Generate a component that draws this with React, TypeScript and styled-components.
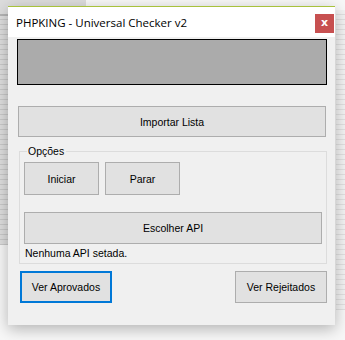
import React from "react";
import styled, { createGlobalStyle } from "styled-components";

const GlobalStyle = createGlobalStyle`
  html, body {
    margin: 0;
    padding: 0;
    background: #f6f6f6;
  }
  * {
    box-sizing: border-box;
  }
`;

export default function App() {
  return (
    <>
      <GlobalStyle />
      <Desktop>
        <LeftStrip />
        <TopBand />
        <RightStrip />
        <Window>
          <TitleBar>
            <Title>PHPKING - Universal Checker v2</Title>
            <CloseButton>x</CloseButton>
          </TitleBar>
          <Content>
            <Display />
            <WideButton>Importar Lista</WideButton>
            <GroupBox>
              <Legend>Opções</Legend>
              <ButtonRow>
                <SmallButton>Iniciar</SmallButton>
                <SmallButton>Parar</SmallButton>
              </ButtonRow>
              <ApiButton>Escolher API</ApiButton>
              <StatusLabel>Nenhuma API setada.</StatusLabel>
            </GroupBox>
            <Footer>
              <FooterButton $focused>Ver Aprovados</FooterButton>
              <FooterButton>Ver Rejeitados</FooterButton>
            </Footer>
          </Content>
        </Window>
      </Desktop>
    </>
  );
}

const Desktop = styled.div`
  position: relative;
  width: 345px;
  height: 340px;
  overflow: hidden;
  padding: 6px 0 0 8px;
  background: #f7f7f7;
`;

const LeftStrip = styled.div`
  position: absolute;
  left: 0;
  top: 15px;
  width: 8px;
  height: 230px;
  background: repeating-linear-gradient(
    to bottom,
    #dedede 0px,
    #dedede 4px,
    #c9c9c9 4px,
    #c9c9c9 5px
  );
`;

const TopBand = styled.div`
  position: absolute;
  left: 0;
  top: 0;
  width: 86px;
  height: 16px;
  background: #dcdcdc;
  border-bottom: 2px solid #b4b4b4;
`;

const RightStrip = styled.div`
  position: absolute;
  right: 0;
  top: 10px;
  width: 9px;
  height: 300px;
  background: repeating-linear-gradient(
    to bottom,
    #f2f2f2 0px,
    #f2f2f2 4px,
    #e0e0e0 4px,
    #e0e0e0 5px
  );
`;

const Window = styled.div`
  position: relative;
  z-index: 1;
  width: 327px;
  height: 319px;
  background: #f0f0f0;
  box-shadow: 0 4px 14px rgba(0, 0, 0, 0.28);
  display: flex;
  flex-direction: column;
`;

const TitleBar = styled.div`
  height: 31px;
  background: #ffffff;
  border-top: 1px solid #a8c23c;
  display: flex;
  align-items: flex-start;
  justify-content: space-between;
  padding: 0 1px 0 8px;
`;

const Title = styled.div`
  font-family: "Open Sans", "Noto Sans", sans-serif;
  font-size: 11.5px;
  line-height: 16px;
  margin-top: 8px;
  color: #000;
`;

const CloseButton = styled.div`
  width: 19px;
  height: 19px;
  margin-top: 7px;
  background: #c75050;
  color: #fff;
  font-family: "DejaVu Sans", sans-serif;
  font-weight: bold;
  font-size: 11px;
  line-height: 17px;
  text-align: center;
`;

const Content = styled.div`
  display: flex;
  flex-direction: column;
  padding: 2px 8px 0 9px;
  font-family: "Liberation Sans", Arial, sans-serif;
  font-size: 10.5px;
  color: #000;
`;

const Display = styled.div`
  width: 310px;
  height: 46px;
  background: #ababab;
  border: 1px solid #000;
`;

const Button = styled.div`
  display: flex;
  align-items: center;
  justify-content: center;
  background: #e1e1e1;
  border: 1px solid #adadad;
  font-family: "Liberation Sans", Arial, sans-serif;
  font-size: 10.5px;
  color: #000;
`;

const WideButton = styled(Button)`
  width: 308px;
  height: 31px;
  margin: 21px 0 0 1px;
`;

const GroupBox = styled.div`
  position: relative;
  width: 308px;
  height: 113px;
  margin: 14px 0 0 2px;
  border: 1px solid #dcdcdc;
  padding: 10px 5px 0 4px;
  display: flex;
  flex-direction: column;
`;

const Legend = styled.span`
  position: absolute;
  top: -7px;
  left: 7px;
  padding: 0 2px 0 1px;
  background: #f0f0f0;
  line-height: 13px;
`;

const ButtonRow = styled.div`
  display: flex;
  gap: 6px;
`;

const SmallButton = styled(Button)`
  width: 75px;
  height: 33px;
`;

const ApiButton = styled(Button)`
  width: 298px;
  height: 32px;
  margin-top: 17px;
`;

const StatusLabel = styled.div`
  margin: 3px 0 0 1px;
  line-height: 13px;
`;

const Footer = styled.div`
  display: flex;
  justify-content: space-between;
  margin: 7px 0 0 3px;
  width: 307px;
`;

const FooterButton = styled(Button)<{ $focused?: boolean }>`
  width: 92px;
  height: 32px;
  border: ${(p) => (p.$focused ? "2px solid #0078d7" : "1px solid #adadad")};
`;
